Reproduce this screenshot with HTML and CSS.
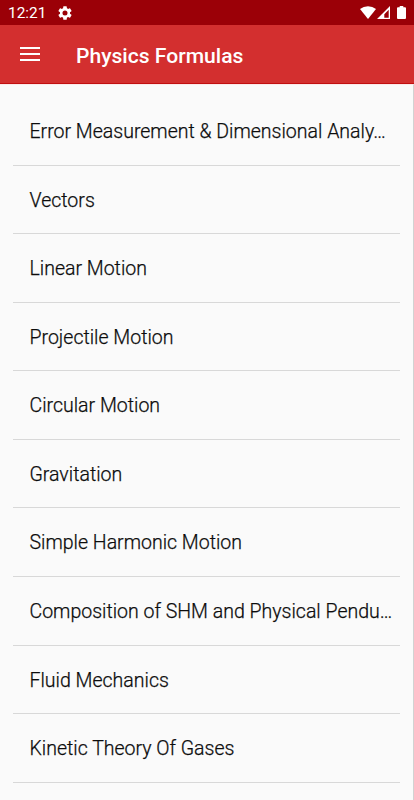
FILE: index.html
```html
<!DOCTYPE html>
<html lang="en">
<head>
  <meta charset="UTF-8" />
  <meta name="viewport" content="width=device-width, initial-scale=1.0" />
  <title>Physics Formulas</title>
  <link rel="stylesheet" href="styles.css">
</head>
<body>
  <div class="status-bar">
    <span class="time">12:21</span>
    <svg class="gear" viewBox="2 2 20 20"><path d="M19.14 12.94c.04-.3.06-.61.06-.94s-.02-.64-.07-.94l2.03-1.58a.49.49 0 0 0 .12-.61l-1.92-3.32a.49.49 0 0 0-.59-.22l-2.39.96c-.5-.38-1.03-.7-1.62-.94l-.36-2.54A.48.48 0 0 0 13.92 2.4h-3.84a.48.48 0 0 0-.48.41l-.36 2.54c-.59.24-1.13.57-1.62.94l-2.39-.96a.48.48 0 0 0-.59.22L2.72 8.87a.48.48 0 0 0 .12.61l2.03 1.58c-.05.3-.07.62-.07.94s.02.64.07.94l-2.03 1.58a.49.49 0 0 0-.12.61l1.92 3.32c.12.22.37.29.59.22l2.39-.96c.5.38 1.03.7 1.62.94l.36 2.54c.05.24.24.41.48.41h3.84c.24 0 .44-.17.47-.41l.36-2.54c.59-.24 1.13-.56 1.62-.94l2.39.96c.22.08.47 0 .59-.22l1.92-3.32a.48.48 0 0 0-.12-.61zM12 15.6a3.6 3.6 0 1 1 0-7.2 3.6 3.6 0 0 1 0 7.2z"/></svg>
    <div class="status-icons">
      <svg class="wifi" viewBox="0 0 16 13"><path d="M8 13 0 3a13 13 0 0 1 16 0z"/></svg>
      <svg class="signal" viewBox="0 0 13 13"><path fill-rule="evenodd" d="M13 0v13H0zM11.7 3.8 7.3 8.2v3.5h4.4z"/></svg>
      <svg class="battery" viewBox="0 0 9 13"><path d="M2.7 0h3.6v1.3H8a1 1 0 0 1 1 1V12a1 1 0 0 1-1 1H1a1 1 0 0 1-1-1V2.3a1 1 0 0 1 1-1h1.7z"/></svg>
    </div>
  </div>

  <header>
    <svg class="menu" viewBox="0 0 20 14"><path d="M0 0h20v2H0zM0 6h20v2H0zM0 12h20v2H0z"/></svg>
    <h1>Physics Formulas</h1>
  </header>

  <ul class="topic-list">
    <li>Error Measurement &amp; Dimensional Analy…</li>
    <li>Vectors</li>
    <li>Linear Motion</li>
    <li>Projectile Motion</li>
    <li>Circular Motion</li>
    <li>Gravitation</li>
    <li>Simple Harmonic Motion</li>
    <li>Composition of SHM and Physical Pendu…</li>
    <li>Fluid Mechanics</li>
    <li>Kinetic Theory Of Gases</li>
  </ul>
</body>
</html>
```

FILE: styles.css
```css
:root {
  --bar-color: #9b0007;
  --primary-color: #d32f2f;
  --bg-color: #fafafa;
  --line-color: #d8d8d8;
}

* {
  box-sizing: border-box;
  margin: 0;
  padding: 0;
}

body {
  height: 800px;
  overflow: hidden;
  font-family: Roboto, sans-serif;
  background: var(--bg-color);
  color: #0c0c0c;
}

svg {
  display: block;
  fill: white;
}

.status-bar {
  display: flex;
  align-items: center;
  height: 25px;
  padding: 0 8px;
  background: var(--bar-color);
  color: white;
}

.time {
  width: 49.5px;
  padding-top: 1px;
  font-size: 15.4px;
}

.gear {
  width: 14px;
  height: 14px;
}

.status-icons {
  display: flex;
  margin-left: auto;
}

.wifi {
  width: 16px;
  height: 13px;
}

.signal {
  width: 13px;
  height: 13px;
  margin-left: 1px;
}

.battery {
  width: 9px;
  height: 13px;
  margin-left: 7px;
}

header {
  display: flex;
  align-items: center;
  height: 59px;
  padding: 0 19.5px;
  background: var(--primary-color);
  border-bottom: 1px solid #c10f10;
  color: white;
}

.menu {
  width: 20px;
  height: 14px;
  margin-right: 36.5px;
}

h1 {
  padding-top: 3px;
  font-size: 21.1px;
  font-weight: 500;
}

.topic-list {
  height: 716px;
  list-style: none;
  padding: 12px 13px 0;
  border-top: 1px solid #fbe9e9;
  border-right: 1px solid #d2d2d2;
}

.topic-list li {
  height: 68.58px;
  padding-left: 16.5px;
  border-bottom: 1px solid var(--line-color);
  font-size: 19.53px;
  font-weight: 300;
  line-height: 69px;
  white-space: nowrap;
  -webkit-text-stroke: 0.25px #0c0c0c;
}
```
